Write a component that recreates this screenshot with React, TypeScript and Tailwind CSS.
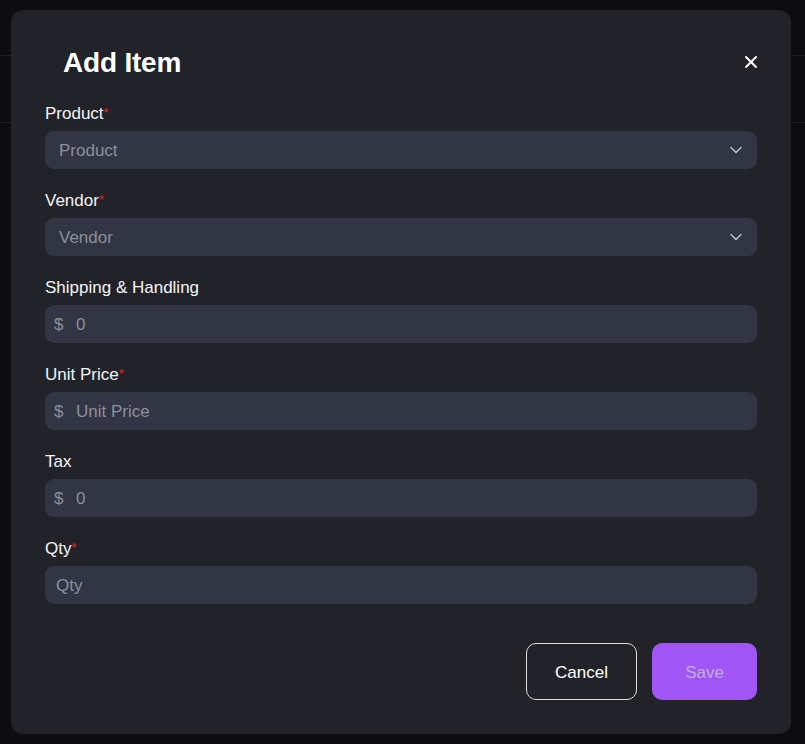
import React from "react";
import { ChevronDown, X } from "lucide-react";

type Field = {
  label: string;
  required?: boolean;
  kind: "select" | "money" | "text";
  placeholder: string;
};

const fields: Field[] = [
  { label: "Product", required: true, kind: "select", placeholder: "Product" },
  { label: "Vendor", required: true, kind: "select", placeholder: "Vendor" },
  { label: "Shipping & Handling", kind: "money", placeholder: "0" },
  { label: "Unit Price", required: true, kind: "money", placeholder: "Unit Price" },
  { label: "Tax", kind: "money", placeholder: "0" },
  { label: "Qty", required: true, kind: "text", placeholder: "Qty" },
];

function FieldRow({ field }: { field: Field }) {
  return (
    <div className="flex flex-col">
      <label className="h-6 leading-[26px] text-[17px] text-[#f4f4f5] mb-[6px]">
        {field.label}
        {field.required && (
          <span className="text-[#e5252a] text-[13px] align-top relative -top-[1px]">*</span>
        )}
      </label>
      {field.kind === "select" && (
        <div className="h-[38.5px] rounded-[9px] bg-[#323644] flex items-center justify-between pl-[14px] pr-[11px] pt-[2px]">
          <span className="text-[17px] text-[#8b8f9a]">{field.placeholder}</span>
          <ChevronDown size={20} strokeWidth={1.6} className="text-[#c5c9d2] -mt-[1px]" />
        </div>
      )}
      {field.kind === "money" && (
        <div className="h-[38.5px] rounded-[9px] bg-[#323644] flex items-center pl-[9px] pt-[2px]">
          <span className="text-[17px] text-[#8b8f9a] w-[22px]">$</span>
          <input
            className="flex-1 bg-transparent outline-none text-[17px] text-white placeholder:text-[#8b8f9a]"
            placeholder={field.placeholder}
          />
        </div>
      )}
      {field.kind === "text" && (
        <div className="h-[38.5px] rounded-[9px] bg-[#323644] flex items-center pl-[11px] pt-[2px]">
          <input
            className="flex-1 bg-transparent outline-none text-[17px] text-white placeholder:text-[#8b8f9a]"
            placeholder={field.placeholder}
          />
        </div>
      )}
    </div>
  );
}

export default function App() {
  return (
    <div
      className="relative w-[805px] h-[744px] bg-[#0d0d0f] overflow-hidden"
      style={{ fontFamily: '"Liberation Sans", Arial, sans-serif' }}
    >
      {/* page behind the dialog */}
      <div className="h-[56px] border-b border-[#1d1f25]" />
      <div className="h-[67px] border-b border-[#1d1f25]" />

      <div className="absolute left-[11px] top-[10px] w-[780px] h-[724px] rounded-[12px] bg-[#212329] px-[34px] pt-[36px]">
        <div className="h-8 flex items-center justify-between">
          <h2 className="ml-[18px] pt-[2px] text-[28px] leading-8 font-bold text-white tracking-[-0.2px]">Add Item</h2>
          <button className="mr-[-4px] text-white" aria-label="Close">
            <X size={20} strokeWidth={2.4} />
          </button>
        </div>

        <div className="mt-[22.5px] flex flex-col gap-[18.5px]">
          {fields.map((f) => (
            <FieldRow key={f.label} field={f} />
          ))}
        </div>

        <div className="mt-[38.5px] flex justify-end gap-[15px]">
          <button className="w-[111px] h-[57px] rounded-[10px] border border-[#dcdcdc] text-[17px] text-white pt-[4px]">
            Cancel
          </button>
          <button className="w-[105px] h-[57px] rounded-[10px] bg-[#a155f5] text-[17px] text-[#c2b0d6] pt-[4px]">
            Save
          </button>
        </div>
      </div>
    </div>
  );
}
